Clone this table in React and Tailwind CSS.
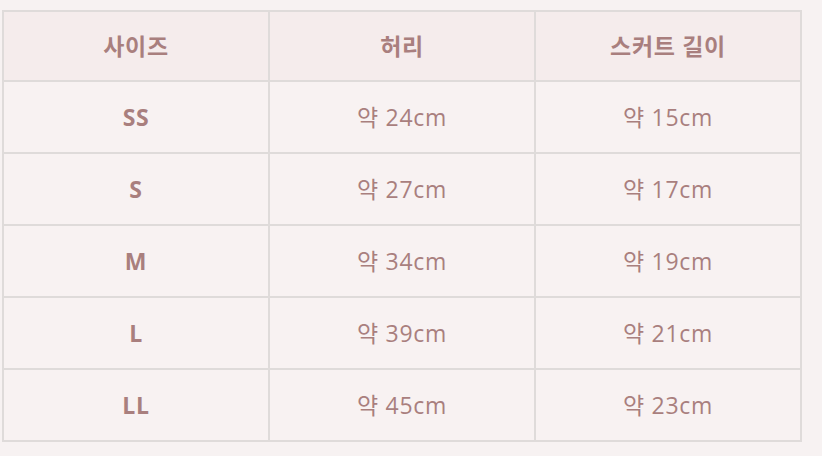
import React from "react";

const rows = [
  { size: "SS", waist: "약 24cm", skirt: "약 15cm" },
  { size: "S", waist: "약 27cm", skirt: "약 17cm" },
  { size: "M", waist: "약 34cm", skirt: "약 19cm" },
  { size: "L", waist: "약 39cm", skirt: "약 21cm" },
  { size: "LL", waist: "약 45cm", skirt: "약 23cm" },
];

const font = { fontFamily: '"Open Sans", "Noto Sans CJK KR", sans-serif' };

function App() {
  return (
    <div className="w-[822px] h-[456px] bg-[#f7f2f2] pt-[10px] pl-[2px]" style={font}>
      <div className="w-[800px] grid grid-cols-3 gap-[2px] p-[2px] bg-[#dfdbda] text-[#a97f7e] text-[23px] tracking-[0.03em]">
        {["사이즈", "허리", "스커트 길이"].map((h) => (
          <div key={h} className="h-[68px] bg-[#f5ecec] flex items-center justify-center font-bold">
            {h}
          </div>
        ))}
        {rows.map((r) => (
          <React.Fragment key={r.size}>
            <div className="h-[70px] bg-[#f8f2f2] flex items-center justify-center font-bold">{r.size}</div>
            <div className="h-[70px] bg-[#f8f2f2] flex items-center justify-center">{r.waist}</div>
            <div className="h-[70px] bg-[#f8f2f2] flex items-center justify-center">{r.skirt}</div>
          </React.Fragment>
        ))}
      </div>
    </div>
  );
}

export default App;
